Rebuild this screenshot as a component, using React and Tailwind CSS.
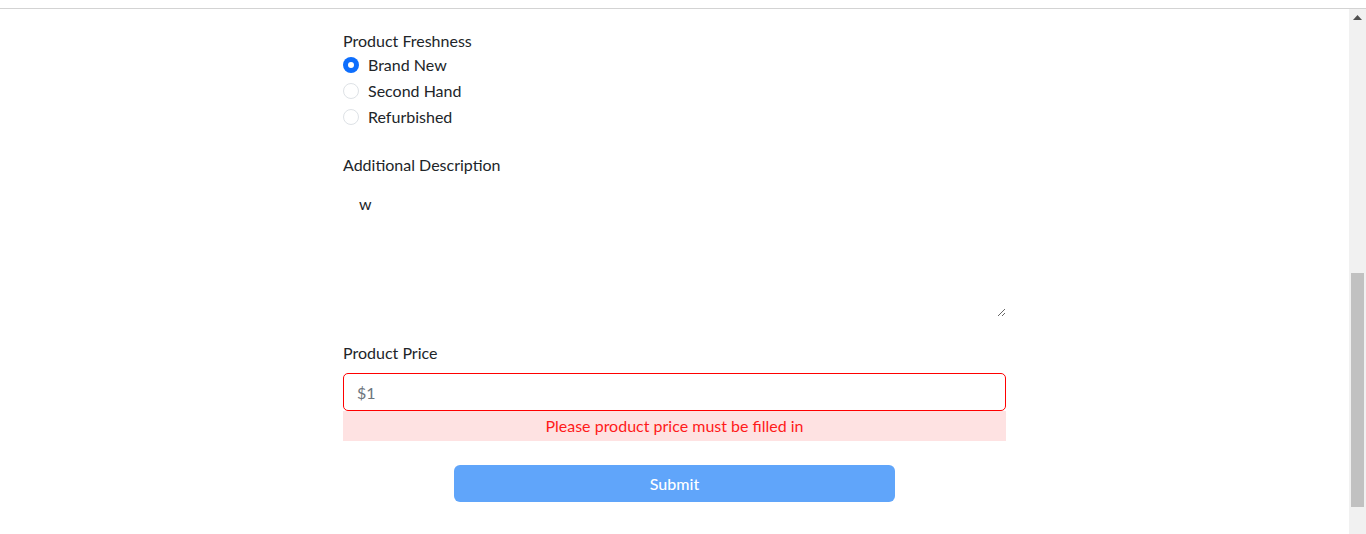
import { useState } from "react";

const font = { fontFamily: '"Lato", "Noto Sans", sans-serif' };

function Radio({ checked, label, onChange }) {
  return (
    <label className="flex items-center h-6 cursor-pointer" onClick={onChange}>
      {checked ? (
        <span className="w-4 h-4 rounded-full bg-[#0d6efd] flex items-center justify-center">
          <span className="w-[6px] h-[6px] rounded-full bg-white" />
        </span>
      ) : (
        <span className="w-4 h-4 rounded-full border border-[#dee2e6] bg-white" />
      )}
      <span className="ml-[9px] text-[16px] text-[#212529]">{label}</span>
    </label>
  );
}

export default function App() {
  const [fresh, setFresh] = useState("Brand New");
  const [desc, setDesc] = useState("w");
  const [price, setPrice] = useState("$1");

  return (
    <div className="h-[534px] overflow-hidden bg-white flex flex-col" style={font}>
      <div className="h-2 shrink-0" />
      <div className="h-px bg-[#d3d3d3] shrink-0" />
      <div className="flex flex-1 min-h-0">
        {/* Content */}
        <main className="flex-1 flex justify-center">
          <form className="w-[663px] pt-5" onSubmit={(e) => e.preventDefault()}>
            <div className="text-[16px] leading-6 text-[#212529]">Product Freshness</div>
            <div className="flex flex-col gap-0.5">
              {["Brand New", "Second Hand", "Refurbished"].map((o) => (
                <Radio key={o} label={o} checked={fresh === o} onChange={() => setFresh(o)} />
              ))}
            </div>

            <div className="mt-6 text-[16px] leading-6 text-[#212529]">Additional Description</div>
            <textarea
              value={desc}
              onChange={(e) => setDesc(e.target.value)}
              className="mt-[3px] block w-full h-[137px] px-4 py-3 text-[16px] leading-6 text-[#212529] outline-none resize-y"
            />

            <div className="mt-6 text-[16px] leading-6 text-[#212529]">Product Price</div>
            <input
              value={price}
              onChange={(e) => setPrice(e.target.value)}
              className="mt-2 block w-full h-[38px] px-[13px] border border-[#ff0000] rounded-[5px] text-[16px] text-[#6c757d] outline-none"
            />
            <div className="h-[30px] bg-[#fee2e2] text-[#ff1a1a] text-[16px] flex items-center justify-center">
              Please product price must be filled in
            </div>

            <div className="flex justify-center mt-6">
              <button
                type="submit"
                className="w-[441px] h-[37px] rounded-md bg-[#60a5fa] text-white text-[16px] font-medium"
              >
                Submit
              </button>
            </div>
          </form>
        </main>

        {/* Scrollbar */}
        <div className="w-[17px] shrink-0 bg-[#f1f1f1] flex flex-col items-center">
          <div className="h-[17px] flex items-center justify-center">
            <svg width="9" height="5" viewBox="0 0 9 5">
              <path d="M4.5 0 L9 5 L0 5 Z" fill="#505050" />
            </svg>
          </div>
          <div className="mt-[247px] w-[13px] h-[234px] bg-[#c1c1c1]" />
        </div>
      </div>
    </div>
  );
}
